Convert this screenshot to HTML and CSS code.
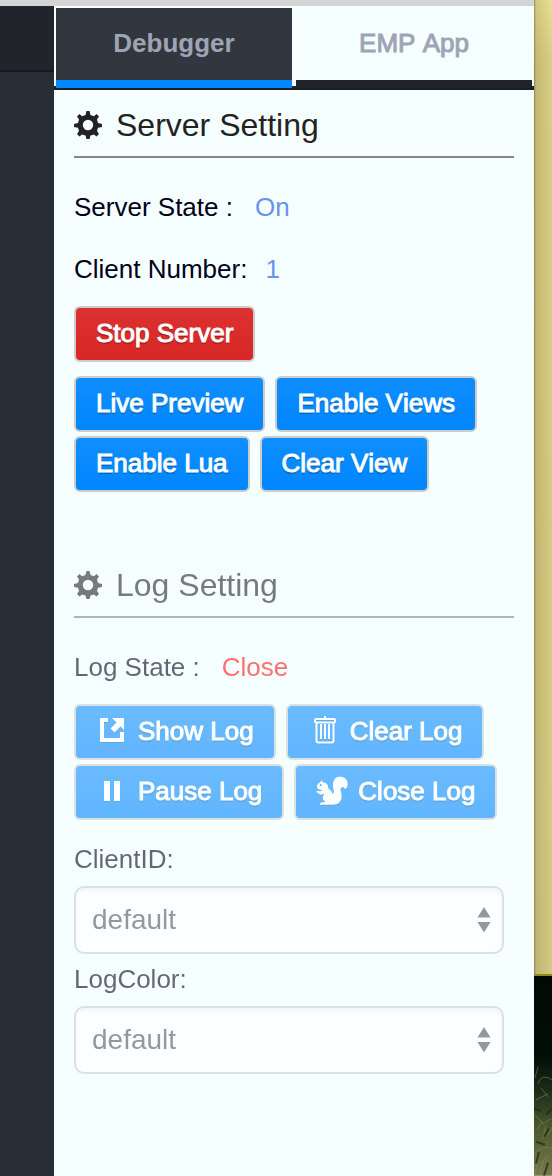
FILE: index.html
```html
<!DOCTYPE html>
<html lang="en">
<head>
<meta charset="utf-8">
<meta name="viewport" content="width=device-width, initial-scale=1">
<title>Debugger</title>
<link rel="stylesheet" href="styles.css">
</head>
<body>
<svg class="defs" aria-hidden="true">
  <symbol id="gear" viewBox="0 0 28 28">
    <path fill="currentColor" fill-rule="evenodd" d="M12.500 0h3l1 4 3.500 1.200L22.500 3 25 5.500 23 8.500l1 3.500 4 1v3l-4 .7-1 3.300 2 3-2.500 2.500-2.500-2-3.500 1-1 3.500h-3l-1-3.500L8 23.500l-2.500 2L3 23l2-3-1-3.300L0 16v-3l4-1 1-3.500-2-3L5.500 3 8 5.200 11.500 4zM14 8.800a5.200 5.200 0 1 0 0 10.400a5.200 5.200 0 1 0 0-10.400z"/>
  </symbol>
</svg>
<div class="window">
  <div class="main">
    <div class="titlebar"></div>
    <div class="workspace">
      <aside class="editor"><div class="editor-tabs"></div></aside>
      <main class="panel">
        <div class="tabs" role="tablist">
          <button class="tab tab-active" role="tab" aria-selected="true">Debugger</button>
          <button class="tab" role="tab" aria-selected="false">EMP App</button>
        </div>
        <section class="section">
          <h2 class="heading"><svg class="gear" aria-hidden="true"><use href="#gear"/></svg>Server Setting</h2>
          <p class="state"><span>Server State :</span><span class="value">On</span></p>
          <p class="state state-count"><span>Client Number:</span><span class="value">1</span></p>
          <div class="buttons buttons-single">
            <button class="btn btn-error">Stop Server</button>
          </div>
          <div class="buttons">
            <button class="btn">Live Preview</button>
            <button class="btn">Enable Views</button>
            <button class="btn">Enable Lua</button>
            <button class="btn">Clear View</button>
          </div>
        </section>
        <section class="section section-log">
          <h2 class="heading"><svg class="gear" aria-hidden="true"><use href="#gear"/></svg>Log Setting</h2>
          <p class="state"><span>Log State :</span><span class="value value-closed">Close</span></p>
          <div class="buttons buttons-log">
            <button class="btn"><svg class="icon" viewBox="0 0 32 32" aria-hidden="true"><path d="M12 3H4v24h24V17h-4v6H8V7h4zM16 3h12v12l-3.500-3.500-6 6-4-4 6-6z"/></svg>Show Log</button>
            <button class="btn"><svg class="icon" viewBox="0 0 32 32" aria-hidden="true"><path d="M17 1v3" class="line"/><rect x="7" y="4" width="20" height="3.500" rx="1" class="line"/><path d="M8.500 8v18q0 1.500 1.500 1.500h14q1.500 0 1.500-1.500V8M13 9v15M17 9v15M21 9v15" class="line"/></svg>Clear Log</button>
            <button class="btn"><svg class="icon" viewBox="0 0 32 32" aria-hidden="true"><path d="M8 6h6v20H8zM18 6h6v20h-6z"/></svg>Pause Log</button>
            <button class="btn"><svg class="icon" viewBox="0 0 96 96" aria-hidden="true"><path fill-rule="evenodd" d="M16 16l5 6q10 0 14 8c2 6 0 8 4 12 5 4 9 8 10 14l4-3c2-7-4-14-2-26C53 12 60 5 71 5c14 0 25 8 24 23 0 8-3 14-8 14-2-5-7-7-11-4-4 4-2 9 0 17 3 14-1 24-9 30-4 3-9 4-15 4H12q-1-6 8-7l8-1q-9-7-8-14c0-4 3-7 5-11l-10 3q-7 0-8-5l-7-2 4-5 9 2 7-5-10 0q-7-2-7-8c0-7 4-11 10-14zM14 27a3 3 0 1 0 .1 0z"/></svg>Close Log</button>
          </div>
          <div class="field">
            <label class="label" for="client">ClientID:</label>
            <select class="select" id="client"><option>default</option></select>
          </div>
          <div class="field">
            <label class="label" for="color">LogColor:</label>
            <select class="select" id="color"><option>default</option></select>
          </div>
        </section>
      </main>
    </div>
  </div>
  <div class="desktop">
    <div class="note"></div>
    <svg class="grass" viewBox="0 0 18 200" preserveAspectRatio="none" aria-hidden="true">
      <defs><linearGradient id="field" x2="0" y2="1"><stop offset="0" stop-color="#010904"/><stop offset=".4" stop-color="#030e07"/><stop offset=".58" stop-color="#1c2c1a"/><stop offset=".74" stop-color="#46552b"/><stop offset="1" stop-color="#77784a"/></linearGradient></defs>
      <path fill="url(#field)" d="M0 0h18v200H0z"/>
      <path class="blade" d="M1 102l3-11M4 108q3-11 14-4M7 112l7 9M2 124l12-6M1 139l8 9 8-5M3 154l5-8M9 163l3-14M0 178q10-10 18-5M6 199q2-17 9-19M3 187l-2 13M14 160l4-9"/>
      <path class="shade" d="M0 133l7 2M12 139l6-6M2 166l9 3M14 187l-4 13M5 176l-3 12M15 153l-5 8"/>
    </svg>
  </div>
</div>
</body>
</html>
```
FILE: styles.css
```css
* { box-sizing: border-box; }

body {
  margin: 0;
  font-family: "Liberation Sans", Arial, sans-serif;
  font-size: 26px;
  font-kerning: none;
  line-height: 30px;
  color: #000018;
  background: #f5ffff;
}

button, select { font: inherit; font-kerning: none; }

.defs { display: block; width: 0; height: 0; }

.window { display: flex; min-height: 100vh; }
.main { flex: 1; display: flex; flex-direction: column; min-width: 0; }
.titlebar { height: 6px; background: #d4d4d4; }
.workspace { flex: 1; display: flex; }

.editor { width: 54px; background: #292d35; }
.editor-tabs { height: 66px; background: #21242b; border-bottom: 2px solid #19181d; }

.panel { flex: 1; min-width: 0; background: #f5ffff; }

.tabs {
  display: flex;
  gap: 4px;
  padding: 2px 2px 0;
  border-bottom: 2px solid #201c23;
  background: linear-gradient(to top, #21242b 2px, transparent 2px);
}
.tab {
  flex: 1;
  height: 80px;
  padding: 0 0 2px;
  border: 0;
  border-bottom: 8px solid #21242b;
  background: #f5ffff;
  color: #9da5b4;
  -webkit-text-stroke: 1px currentColor;
}
.tab-active {
  border-bottom-color: #0088ff;
  background: #32363f;
  font-weight: bold;
  -webkit-text-stroke: 0;
}

.section { padding: 0 20px; }
.section-log { margin-top: 58px; opacity: 0.6; }

.heading {
  display: flex;
  align-items: center;
  gap: 14px;
  margin: 0 0 34px;
  padding: 17px 0 13px;
  border-bottom: 2px solid #85868a;
  font-size: 32px;
  font-weight: normal;
  line-height: 36px;
  color: #222;
}
.gear { width: 28px; height: 28px; }

.state { display: flex; gap: 22px; margin: 0; }
.state-count { gap: 18px; margin-top: 32px; }
.value { color: #6495ed; }
.value-closed { color: #ff1010; }

.buttons {
  display: flex;
  flex-wrap: wrap;
  gap: 4px 10px;
}
.buttons-single { margin: 22px 0 14px; }
.buttons-log { margin: 22px 0 24px; }

.btn {
  display: flex;
  align-items: center;
  gap: 10px;
  height: 56px;
  padding: 0 20px 2px;
  border: 2px solid #ccc;
  border-radius: 6px;
  background: linear-gradient(#0f8eff, #0086ff);
  color: #fff;
  text-shadow: 0 2px 1px rgba(0, 0, 0, 0.25);
  -webkit-text-stroke: 1px #fff;
  white-space: nowrap;
}
.btn-error { background: linear-gradient(#dc3232, #d82626); }

.icon {
  width: 32px;
  height: 32px;
  fill: #fff;
  stroke: none;
  filter: drop-shadow(0 1px 0 rgba(0, 0, 0, 0.2));
}
.icon .line { fill: none; stroke: #fff; stroke-width: 2; }

.field { margin: 0 10px 10px 0; }
.label { display: block; margin-bottom: 12px; }
.select {
  display: block;
  appearance: none;
  width: 100%;
  height: 68px;
  padding: 0 40px 0 16px;
  border: 2px solid #ccc;
  border-radius: 10px;
  background: #fff url("data:image/svg+xml,%3Csvg xmlns='http://www.w3.org/2000/svg' width='14' height='26'%3E%3Cpath fill='%23555' d='M7 0l6.500 10.500H.5zM.5 15h13L7 25.500z'/%3E%3C/svg%3E") no-repeat right 11px center;
  box-shadow: inset 0 3px 4px rgba(0, 0, 0, 0.06);
  color: #555;
  font-size: 28px;
}

.desktop { display: flex; flex-direction: column; width: 18px; }
.note {
  flex: 976;
  border-bottom: 2px solid #978517;
  background:
    linear-gradient(to right, rgba(70, 60, 20, 0.5), rgba(70, 60, 20, 0.14) 2px, transparent),
    linear-gradient(#eadf91, #d8ce84 60px, #d3ca83);
}
.grass { flex: 200; display: block; width: 100%; min-height: 0; }
.blade { fill: none; stroke: #8b9464; stroke-opacity: 0.5; stroke-width: 1; }
.shade { fill: none; stroke: #1d2b12; stroke-opacity: 0.7; stroke-width: 2; }
```
